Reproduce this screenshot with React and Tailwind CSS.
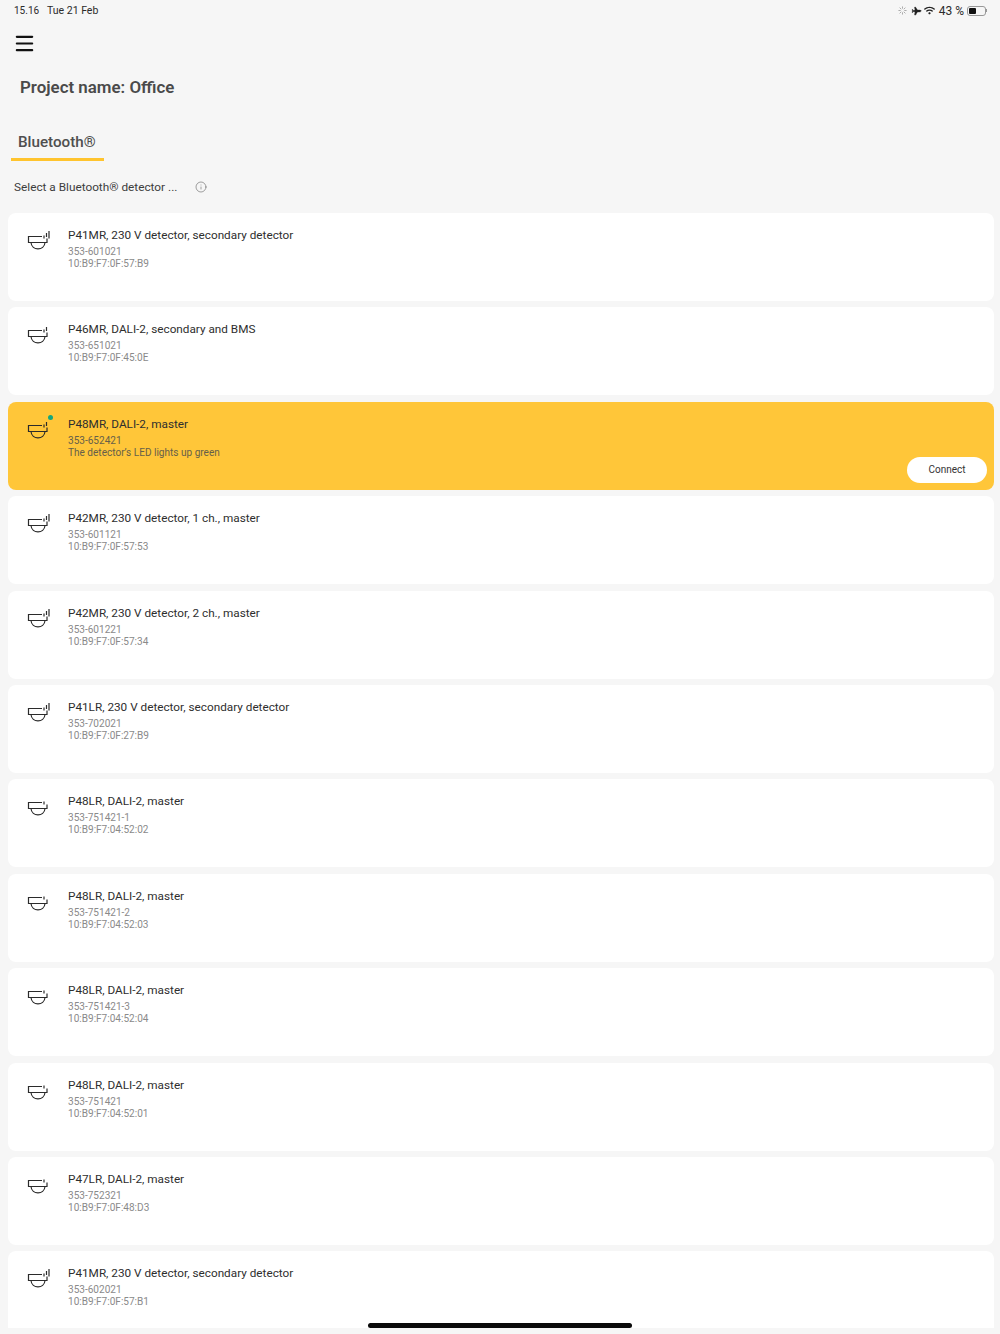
import { Info, Menu, Plane } from 'lucide-react'
import { FaWifi } from 'react-icons/fa'

const detectors = [
  { name: 'P41MR, 230 V detector, secondary detector', code: '353-601021', info: '10:B9:F7:0F:57:B9', bars: 3 },
  { name: 'P46MR, DALI-2, secondary and BMS', code: '353-651021', info: '10:B9:F7:0F:45:0E', bars: 2 },
  { name: 'P48MR, DALI-2, master', code: '353-652421', info: 'The detector\u2019s LED lights up green', bars: 2, active: true },
  { name: 'P42MR, 230 V detector, 1 ch., master', code: '353-601121', info: '10:B9:F7:0F:57:53', bars: 3 },
  { name: 'P42MR, 230 V detector, 2 ch., master', code: '353-601221', info: '10:B9:F7:0F:57:34', bars: 3 },
  { name: 'P41LR, 230 V detector, secondary detector', code: '353-702021', info: '10:B9:F7:0F:27:B9', bars: 3 },
  { name: 'P48LR, DALI-2, master', code: '353-751421-1', info: '10:B9:F7:04:52:02', bars: 1 },
  { name: 'P48LR, DALI-2, master', code: '353-751421-2', info: '10:B9:F7:04:52:03', bars: 1 },
  { name: 'P48LR, DALI-2, master', code: '353-751421-3', info: '10:B9:F7:04:52:04', bars: 1 },
  { name: 'P48LR, DALI-2, master', code: '353-751421', info: '10:B9:F7:04:52:01', bars: 1 },
  { name: 'P47LR, DALI-2, master', code: '353-752321', info: '10:B9:F7:0F:48:D3', bars: 1 },
  { name: 'P41MR, 230 V detector, secondary detector', code: '353-602021', info: '10:B9:F7:0F:57:B1', bars: 3 },
]

function DetectorIcon({ bars }) {
  return (
    <svg width="24" height="22" viewBox="0 0 24 22" fill="none" stroke="#2b2b2b" strokeWidth="1.2" className="shrink-0">
      <path d="M15 7.500H1.500v6h18.500V9.500" />
      <path d="M4 13.500c.6 8.500 13.400 8.500 14 0" />
      {bars > 0 && <path d="M17 9.500V6.500" />}
      {bars > 1 && <path d="M19.500 8V4" />}
      {bars > 2 && <path d="M22 9.500V2" />}
    </svg>
  )
}

function DetectorCard({ detector }) {
  const { name, code, info, bars, active } = detector
  return (
    <div className={`relative flex h-[88px] shrink-0 items-start rounded-lg pl-[19px] ${active ? 'bg-[#ffc639]' : 'bg-white'}`}>
      <div className="relative mt-[16px] w-[41px]">
        <DetectorIcon bars={bars} />
        {active && <span className="absolute left-[21px] top-[-3px] h-[5px] w-[5px] rounded-full bg-[#16a77c]" />}
      </div>
      <div className="pt-[14px]">
        <p className="text-[11.750px] leading-[16px] text-[#2e2e2e]">{name}</p>
        <p className={`mt-[3px] text-[10.050px] leading-[12px] ${active ? 'text-[#666049]' : 'text-[#8a8a8a]'}`}>{code}</p>
        <p className={`text-[10.050px] leading-[12px] ${active ? 'text-[#666049]' : 'text-[#8a8a8a]'}`}>{info}</p>
      </div>
      {active && (
        <button className="absolute bottom-[7px] right-[7px] flex h-[26px] w-[80px] items-center justify-center rounded-full bg-white text-[10px] text-[#333]">
          Connect
        </button>
      )}
    </div>
  )
}

export default function App() {
  return (
    <div className="relative h-[1334px] overflow-hidden bg-[#f6f6f6] font-['Roboto',sans-serif]">
      <div className="flex h-[20px] items-center justify-between pl-[14px] pr-[13px] pt-[1px] text-[10.500px] text-[#2b2b2b]">
        <div className="flex gap-[9px]">
          <span className="w-[24px] whitespace-nowrap text-[10px]">15.16</span>
          <span>Tue 21 Feb</span>
        </div>
        <div className="flex items-center">
          <svg width="9" height="9" viewBox="0 0 10 10" stroke="#9a9a9a" strokeWidth="0.9" className="mr-[4px]">
            <path d="M5 .5v2.500M5 7v2.500M.5 5H3M7 5h2.500M1.800 1.800l1.800 1.800M6.400 6.400l1.800 1.800M8.200 1.800 6.400 3.600M3.600 6.400 1.800 8.200" />
          </svg>
          <Plane size={10} fill="#222" strokeWidth={1} className="rotate-45 text-[#222]" />
          <FaWifi size={11} className="ml-[3px] text-[#222]" />
          <span className="ml-[4px] text-[12px]">43 %</span>
          <div className="ml-[3px] flex items-center">
            <div className="flex h-[10px] w-[19px] rounded-[3px] border border-[#999] p-[1px]">
              <div className="w-[7px] rounded-[1px] bg-[#111]" />
            </div>
            <div className="h-[3px] w-[1px] bg-[#999]" />
          </div>
        </div>
      </div>

      <div className="ml-[13px] mt-[12px]">
        <Menu size={23} strokeWidth={2.3} className="text-[#111]" />
      </div>

      <h1 className="ml-[20px] mt-[20px] text-[16.900px] font-semibold leading-[24px] text-[#4a4a4a]">Project name: Office</h1>

      <div className="ml-[11px] mt-[33px] w-[93px] border-b-[3px] border-[#ffc42e] pb-[5px] pl-[7px] text-[15.200px] font-medium leading-[21px] text-[#4f4f4f]">
        Bluetooth®
      </div>

      <div className="ml-[14px] mt-[19px] flex h-[16px] items-center text-[11.800px] text-[#3d3d3d]">
        <span>Select a Bluetooth® detector ...</span>
        <Info size={12} strokeWidth={1} className="ml-[18px] -translate-y-[1px] text-[#444]" />
      </div>

      <div className="ml-[8px] mr-[6px] mt-[17px] flex h-[1115px] flex-col gap-[6.400px] overflow-hidden">
        {detectors.map((detector) => (
          <DetectorCard key={detector.code} detector={detector} />
        ))}
      </div>

      <div className="absolute bottom-[6px] left-[368px] h-[5px] w-[264px] rounded-full bg-[#0a0a0a]" />
    </div>
  )
}
